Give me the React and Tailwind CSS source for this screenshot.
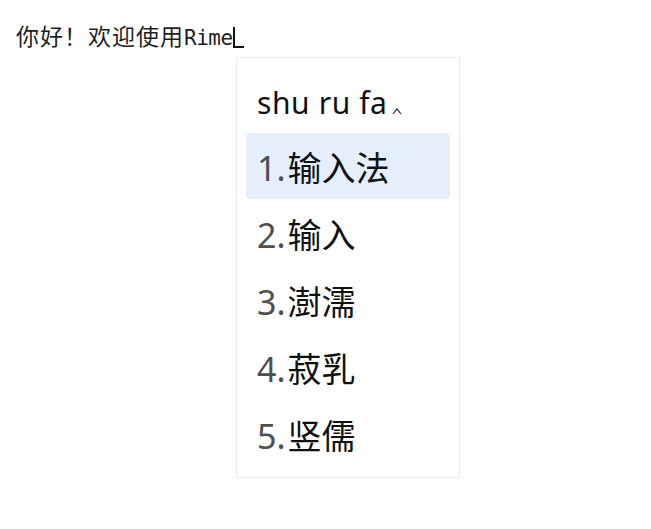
import React from 'react';

const CANDIDATES = ['输入法', '输入', '澍濡', '菽乳', '竖儒'];

function Caret() {
  return (
    <svg width="10" height="8" viewBox="0 0 10 8" className="ml-[4px] mt-[24px]">
      <path d="M1 7 L5 2 L9 7" fill="none" stroke="#222" strokeWidth="1.2" />
    </svg>
  );
}

export default function App() {
  return (
    <div className="w-[651px] h-[529px] bg-white relative overflow-hidden">
      <div className="h-[57px] pl-4 pt-[24px] flex items-baseline text-[#1f1f1f]">
        <span
          className="text-[23px] leading-[22px] tracking-[1px]"
          style={{ fontFamily: '"Noto Sans CJK SC", sans-serif' }}
        >
          你好！欢迎使用
        </span>
        <span
          className="text-[21px] leading-[22px] tracking-[-0.5px]"
          style={{ fontFamily: '"DejaVu Sans Mono", monospace' }}
        >
          Rime
        </span>
        <span className="self-start mt-[3px] w-[11px] h-[21px] border-l-2 border-b-2 border-[#111]" />
      </div>

      <div
        className="ml-[236px] w-[224px] border border-[#e3ecf8] bg-white px-[9px] pt-[9px] pb-[9px]"
        style={{ fontFamily: '"Noto Sans", "Noto Sans CJK SC", sans-serif' }}
      >
        <div className="h-[66px] flex items-start pl-[11px] pt-[16px] text-[30px] leading-[40px] tracking-[0.6px] text-[#111]">
          <span>shu ru fa</span>
          <Caret />
        </div>
        {CANDIDATES.map((c, i) => (
          <div
            key={c}
            className={
              i === 0
                ? 'h-[66px] mb-[1px] pt-[4px] flex items-center pl-[11px] rounded-[4px] bg-[#e5effd] text-[34px]'
                : 'h-[67px] pt-[4px] flex items-center pl-[11px] text-[34px]'
            }
          >
            <span className="text-[#4f4f4f] pr-[2px]">{i + 1}.</span>
            <span className="text-[#111]">{c}</span>
          </div>
        ))}
      </div>
    </div>
  );
}
